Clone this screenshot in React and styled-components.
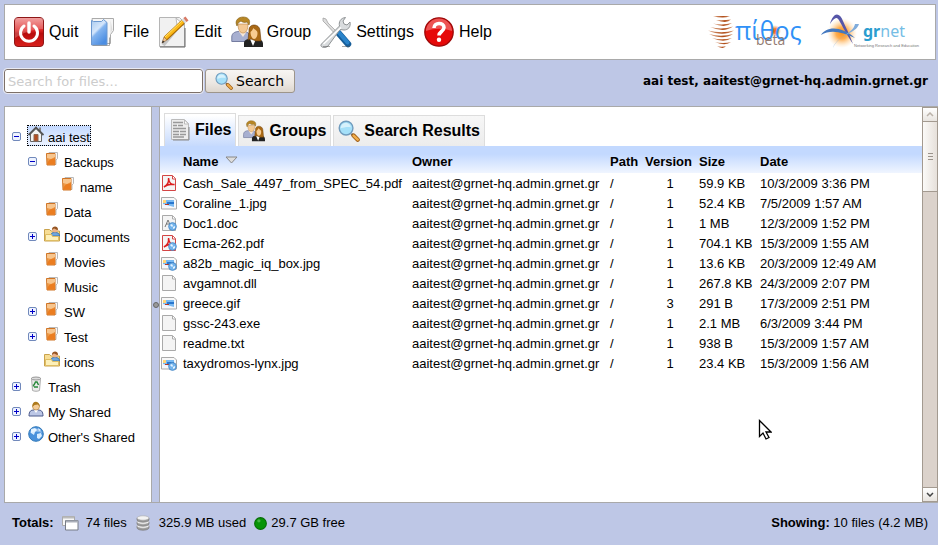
import React from "react";
import styled, { createGlobalStyle, css } from "styled-components";

const GlobalStyle = createGlobalStyle`
  * { box-sizing: border-box; }
  body {
    margin: 0;
    background: #bec7e6;
    color: #000;
    font: 13px/20px "Liberation Sans", Arial, sans-serif;
  }
  button { font: inherit; color: inherit; }
`;

const Page = styled.div`
  display: flex;
  flex-direction: column;
  min-height: 100vh;
`;

const Toolbar = styled.header`
  display: flex;
  align-items: center;
  justify-content: space-between;
  height: 56px;
  margin: 4px 2px 0 4px;
  padding: 0 14px 0 7px;
  background: #fff;
  border: 1px solid #a9a9a9;
`;

const Menu = styled.nav`
  display: flex;
  align-items: center;
  gap: 7px;
`;

const MenuButton = styled.button`
  display: flex;
  align-items: center;
  gap: 4px;
  padding: 0 1px;
  border: 0;
  background: none;
  font-size: 16px;
  line-height: 20px;
  white-space: nowrap;
`;

const Logos = styled.div`
  display: flex;
  align-items: center;
  gap: 16px;
`;

const SearchRow = styled.div`
  display: flex;
  align-items: center;
  justify-content: space-between;
  height: 24px;
  margin: 9px 10px 13px 4px;
`;

const SearchForm = styled.form`
  display: flex;
  gap: 2px;
`;

const SearchInput = styled.input`
  width: 199px;
  height: 24px;
  padding: 0 3px;
  border: 1px solid #7d7068;
  border-radius: 3px;
  outline: 1px solid #e9eaf3;
  background: #fff;
  font: 13px/20px "DejaVu Sans", sans-serif;
  &::placeholder { color: #ccc; opacity: 1; }
`;

const SearchButton = styled.button`
  display: flex;
  align-items: center;
  gap: 3px;
  height: 24px;
  padding: 0 10px 0 9px;
  border: 1px solid #9d958b;
  border-radius: 3px;
  background: linear-gradient(#f7f5f3, #ece7e2 60%, #ddd6ce);
  font: 14px/20px "DejaVu Sans", sans-serif;
`;

const UserName = styled.div`
  font: bold 12px/20px "DejaVu Sans", sans-serif;
`;

const Panels = styled.main`
  display: flex;
  flex: 1;
  margin-left: 4px;
  border-top: 1px solid #a9a9a9;
  border-bottom: 1px solid #a9a9a9;
`;

const Sidebar = styled.aside`
  flex: none;
  width: 148px;
  padding: 16px 0 0 7px;
  background: #fff;
  border: solid #a9a9a9;
  border-width: 0 1px;
`;

const Splitter = styled.div`
  display: flex;
  align-items: center;
  justify-content: center;
  flex: none;
  width: 7px;
`;

const SplitterDot = styled.span`
  flex: none;
  width: 6px;
  height: 6px;
  border: 1px solid #666;
  border-radius: 50%;
  background: #999;
`;

const Content = styled.section`
  flex: 1;
  min-width: 0;
  padding-top: 6px;
  background: #fff;
  border-left: 1px solid #a9a9a9;
`;

const Tree = styled.ul`
  margin: 0;
  padding: 0;
  list-style: none;
`;

const TreeRow = styled.li`
  display: flex;
  align-items: center;
  gap: 6px;
  height: 25px;
  padding-left: ${(p) => p.$depth * 16}px;
`;

const Toggle = styled.button`
  display: block;
  flex: none;
  width: 9px;
  height: 9px;
  margin-top: 1px;
  padding: 0;
  border: 0;
  background: none;
  svg { display: block; }
`;

const ToggleSpace = styled.span`
  flex: none;
  width: 9px;
`;

const TreeItem = styled.button`
  display: flex;
  align-items: center;
  gap: 4px;
  height: 21px;
  padding: 0;
  border: 1px solid transparent;
  background: none;
  white-space: nowrap;
  svg { margin-bottom: 3px; }
  span { margin-top: 4px; }
  ${(p) => p.$selected && css`
    border: 1px dotted #000;
    background: linear-gradient(#c3d9ff, #eaf1ff);
  `}
`;

const Tabs = styled.div`
  display: flex;
  align-items: flex-end;
  gap: 2px;
  height: 33px;
  padding-left: 4px;
`;

const Tab = styled.button`
  display: flex;
  align-items: center;
  gap: 4px;
  height: ${(p) => (p.$active ? 33 : 31)}px;
  padding: 0 4px;
  border: solid #ddd;
  border-width: 1px 1px 0;
  background: ${(p) => (p.$active ? "linear-gradient(#fff 5%, #c6dafd)" : "linear-gradient(#f7f7f7, #ececec)")};
  font-size: 16px;
  font-weight: bold;
  line-height: 20px;
  white-space: nowrap;
`;

const FileTable = styled.table`
  width: 100%;
  table-layout: fixed;
  border-collapse: collapse;
  thead { background: linear-gradient(#c3d9ff 30%, #f0f5ff); }
  col.icon { width: 23px; }
  col.name { width: 229px; }
  col.owner { width: 198px; }
  col.path { width: 35px; }
  col.version { width: 54px; }
  col.size { width: 61px; }
`;

const Th = styled.th`
  height: 27px;
  padding: 5px 0 0;
  text-align: left;
  vertical-align: middle;
  white-space: nowrap;
  svg { margin: 0 0 5px 3px; vertical-align: middle; }
`;

const Td = styled.td`
  height: 20px;
  padding: ${(p) => (p.$icon ? "0 0 0 1px" : "2px 0 0")};
  padding-right: ${(p) => (p.$center ? "4px" : "0")};
  line-height: 18px;
  text-align: ${(p) => (p.$center ? "center" : "left")};
  white-space: nowrap;
  svg { display: block; }
`;

const Scrollbar = styled.div`
  display: flex;
  flex-direction: column;
  flex: none;
  width: 16px;
  background: #dbd2cb;
  border: solid #a39a90;
  border-width: 0 1px;
`;

const ScrollButton = styled.button`
  display: grid;
  place-items: center;
  height: 15px;
  padding: 0;
  border: solid #a39a90;
  border-width: 1px 0;
  background: linear-gradient(#fff, #e8e4df);
`;

const ScrollThumb = styled.div`
  display: grid;
  place-items: center;
  height: 70px;
  border-bottom: 1px solid #a39a90;
  background: linear-gradient(90deg, #fbfaf8, #e6e0da);
`;

const ScrollTrack = styled.div`
  flex: 1;
`;

const Footer = styled.footer`
  display: flex;
  align-items: center;
  justify-content: space-between;
  height: 42px;
  padding: 0 10px 2px 12px;
`;

const Totals = styled.div`
  display: flex;
  align-items: center;
  gap: 8px;
`;

const Total = styled.span`
  display: flex;
  align-items: center;
  gap: ${(p) => p.$gap}px;
`;

const Pointer = styled.svg`
  position: absolute;
  left: 758px;
  top: 419px;
  pointer-events: none;
`;

function QuitIcon() {
  return (
    <svg width="32" height="32" viewBox="0 0 32 32" aria-hidden="true">
      <defs><linearGradient id="quit" x2="0" y2="1"><stop stopColor="#e88" /><stop offset=".45" stopColor="#d22" /><stop offset=".55" stopColor="#b80d0d" /><stop offset="1" stopColor="#d8201c" /></linearGradient></defs>
      <rect x="1.5" y="1.5" width="29" height="29" rx="3.5" fill="url(#quit)" stroke="#8d1717" />
      <path d="M2 2h28v11C20 13 9 17 2 22z" fill="#fff" opacity=".22" />
      <path d="M11 10a8.5 8.5 0 1 0 10 0" fill="none" stroke="#fff" strokeWidth="3" strokeLinecap="round" />
      <path d="M16 7v9" stroke="#fff" strokeWidth="3.4" strokeLinecap="round" />
    </svg>
  );
}

function FileIcon() {
  return (
    <svg width="32" height="32" viewBox="0 0 32 32" aria-hidden="true">
      <defs><linearGradient id="fold" x2=".6" y2="1"><stop stopColor="#a7c9ee" /><stop offset=".45" stopColor="#d5e6fb" /><stop offset=".55" stopColor="#83b4ef" /><stop offset="1" stopColor="#4b8de2" /></linearGradient></defs>
      <path d="M5 2.500h21.500v12l-3 4v9H8z" fill="#f6f6f6" stroke="#aaa" />
      <path d="M23.500 4l2 10-2 3z" fill="#ddd" />
      <path d="M4.500 4.500l2 1h8l2-2 3.500 3v22.500H4.500z" fill="url(#fold)" stroke="#6c98d0" />
      <path d="M5.500 29.500h17v-8" fill="none" stroke="#777" opacity=".6" />
    </svg>
  );
}

function EditIcon() {
  return (
    <svg width="32" height="32" viewBox="0 0 32 32" aria-hidden="true">
      <path d="M1.500 1.500h20l5 5v24h-25z" fill="#f1f1f1" stroke="#b5b5b5" />
      <path d="M2 31h25M27 12v19" stroke="#666" />
      <path d="M18 2l1 7h7z" fill="#fff" stroke="#bbb" />
      <path d="M5 29l20-24" stroke="#000" opacity=".18" strokeWidth="4" />
      <path d="M4 27l2-6 3 3z" fill="#edc18b" stroke="#8a6038" strokeWidth=".6" />
      <path d="M7.500 22.500L25 6" stroke="#a86800" strokeWidth="5" />
      <path d="M7.500 22L25 5.500" stroke="#fbb818" strokeWidth="3.400" />
      <path d="M7 21L24.500 4.500" stroke="#ffe16c" />
      <path d="M25.500 5.500l2.500-2.500" stroke="#ddd" strokeWidth="5" />
      <path d="M27 4l2-1.500" stroke="#d87965" strokeWidth="5" />
      <path d="M4 27l.800-2.500L6.500 26z" fill="#222" />
    </svg>
  );
}

function PeopleIcon({ size = 32 }) {
  return (
    <svg width={size} height={size} viewBox="0 0 32 32" aria-hidden="true">
      <path d="M.800 25.500V21c0-3.500 2.500-5 6-5.500h7c4 .500 5 3 5 10z" fill="#a7afd0" stroke="#747ca0" />
      <path d="M7.500 15l4.500 6 4-6z" fill="#f7e8d8" />
      <path d="M7 8c0 6 2 9 5 9s5-3 5-9z" fill="#f4c994" stroke="#b88143" strokeWidth=".6" />
      <path d="M6 10C3 4 8 1 12 1c5 0 8 3 6 8l-2-3c-3 1-5 0-6-1L7 7z" fill="#b78625" stroke="#805a11" strokeWidth=".6" />
      <path d="M13 31v-4c0-3 3-4 5-4h8c4 0 6 2 6 5v3z" fill="#222" />
      <path d="M19 23l3 7 3-7z" fill="#fff" />
      <path d="M18 15c-1-8 11-8 11 0l1 10h-5l-5-2-3 1z" fill="#a96915" stroke="#6a3d0a" strokeWidth=".6" />
      <path d="M19.500 16c1-1 2-2 3-4 1 2 4 2 4 5 0 4-2 6-3.500 6s-3.500-3-3.500-7z" fill="#f8cc91" />
    </svg>
  );
}

function SettingsIcon() {
  return (
    <svg width="32" height="32" viewBox="0 0 32 32" aria-hidden="true">
      <path d="M3 2l3 1 2 4 10 10-2 2L6 8 3 5z" fill="#ddd" stroke="#999" strokeWidth=".7" />
      <path d="M18.500 17l9.500 11" stroke="#175e99" strokeWidth="6.500" strokeLinecap="round" />
      <path d="M18.500 16l9 10.500" stroke="#2a83ca" strokeWidth="4" strokeLinecap="round" />
      <path d="M1.500 28l18-18c-1-4 1-8 6-8.500L23 5l1 3 3 1 3-3c1 5-2 8-6 8l-4-.500L8 30c-3 3-9 1-6.500-2z" fill="#d9dcde" stroke="#909496" />
      <path d="M3.500 28L21 11.500" stroke="#fff" strokeWidth="1.500" />
      <path d="M3 30.500h7M22 30.500h8" stroke="#555" opacity=".5" />
    </svg>
  );
}

function HelpIcon() {
  return (
    <svg width="32" height="32" viewBox="0 0 32 32" aria-hidden="true">
      <circle cx="16" cy="16" r="14.200" fill="#e60909" stroke="#9c0909" strokeWidth="1.300" />
      <path d="M3 15a13 12.500 0 0 1 26 0c-9-3-17-3-26 0z" fill="#fff" opacity=".3" />
      <path d="M11 12c0-6 10-6 10-.500 0 4-5 4-5 8" fill="none" stroke="#fff" strokeWidth="3.600" />
      <circle cx="16" cy="23.800" r="2.200" fill="#fff" />
    </svg>
  );
}

function MagnifierIcon({ size }) {
  return (
    <svg width={size} height={size} viewBox="0 0 24 24" aria-hidden="true">
      <path d="M14.500 15l2 2" stroke="#777" strokeWidth="2.500" />
      <path d="M17 17l4.500 4.500" stroke="#9c5a12" strokeWidth="4.600" strokeLinecap="round" />
      <path d="M17 17l4.500 4.500" stroke="#f1ae4c" strokeWidth="2.800" strokeLinecap="round" />
      <circle cx="8.800" cy="8.800" r="7.500" fill="#a5e0f9" stroke="#709bbd" strokeWidth="1.500" />
      <path d="M3 9c0-8 11-7 11-1-4-1-7 0-11 1z" fill="#fff" opacity=".55" />
    </svg>
  );
}

function PithosLogo() {
  return (
    <svg width="95" height="40" viewBox="0 0 95 40" role="img" aria-label="πίθος beta">
      <defs>
        <linearGradient id="clay"><stop stopColor="#dba483" /><stop offset=".6" stopColor="#b04d18" /><stop offset="1" stopColor="#cf8d67" /></linearGradient>
        <radialGradient id="sun"><stop stopColor="#ef5a10" /><stop offset=".4" stopColor="#f28038" /><stop offset="1" stopColor="#f8ad72" stopOpacity="0" /></radialGradient>
      </defs>
      <g fill="url(#clay)">
        <path d="M6 4h17q-7 3-17 0z" />
        <path d="M9 8q8 .500 15-.500-4 4.500-15 .500z" />
        <path d="M6 11.500q10 2 19-.500-7 5.500-19 .500z" />
        <path d="M3 15q12 3 23-.500-9 6.500-23 .500z" />
        <path d="M1 18.500q14 3.500 26 0-11 6.500-26 0z" />
        <path d="M2 22q12 3.500 24 0-10 6.500-24 0z" />
        <path d="M5 26q10 2.500 20 0-8 5.500-20 0z" />
        <path d="M8 30q8 2 16 0-6 4.500-16 0z" />
        <path d="M10 34q5 1.500 9 0-3 4-9 0z" />
      </g>
      <circle cx="68" cy="19" r="6" fill="url(#sun)" />
      <text x="28" y="28" fontFamily="Open Sans, sans-serif" fontSize="25" fill="#2f91f7">πίθος</text>
      <text x="49" y="33" fontFamily="Open Sans, sans-serif" fontSize="14" fill="#927b72">beta</text>
    </svg>
  );
}

function GrnetLogo() {
  return (
    <svg width="103" height="40" viewBox="-3 0 103 40" role="img" aria-label="grnet – Networking Research and Education">
      <defs><radialGradient id="glow"><stop stopColor="#ff9015" /><stop offset=".4" stopColor="#ffad4f" /><stop offset="1" stopColor="#ffe0b5" stopOpacity="0" /></radialGradient></defs>
      <circle cx="21" cy="21" r="15" fill="url(#glow)" />
      <path d="M9 12c3-11 9-13 13-3 3 7 6 12 10 23-6-9-9-15-13-22-3-6-5-5-10 2z" fill="#5656a8" />
      <path d="M0 23c5-8 19-10 34 3-13-6-24-9-34-3z" fill="#4478bf" />
      <path d="M38 12C35 22 19 21 12 36c4-12 20-14 22-24z" fill="#80acdb" />
      <text x="42" y="25" fontFamily="Noto Sans, sans-serif" fontSize="16" fill="#75bde5"><tspan fontWeight="bold" fill="#2b9dcf">gr</tspan>net</text>
      <text x="33" y="35" fontFamily="Liberation Sans, sans-serif" fontSize="4" fill="#777">Networking Research and Education</text>
    </svg>
  );
}

function ToggleGlyph({ open }) {
  return (
    <svg width="9" height="9" viewBox="0 0 9 9" aria-hidden="true">
      <rect x=".5" y=".5" width="8" height="8" rx="1.500" fill="#eef3ff" stroke="#7189bb" />
      <path d={open ? "M2 4.500h5" : "M2 4.500h5M4.500 2v5"} stroke="#0000c8" />
    </svg>
  );
}

function TreeIcon({ kind }) {
  const art = {
    home: (
      <>
        <path d="M2.500 8v7.500h11V8L8 2.500z" fill="#f2f2f2" stroke="#666" />
        <path d="M11 1.500h2V6h-2z" fill="#888" />
        <path d="M.500 9L8 1.500 15.500 9" fill="none" stroke="#555" strokeWidth="1.800" />
        <path d="M6 15V8.500h4V15z" fill="#b44d20" stroke="#8e6850" />
      </>
    ),
    folder: (
      <>
        <path d="M5 1.500h8.500v6L12 9v4.500H5z" fill="#f7f7f7" stroke="#b9b9b9" />
        <path d="M2.500 2.500h8.500v11.500H3z" fill="#ee9b48" stroke="#cf7425" />
        <path d="M3 3h8v3l-4 2-4-1z" fill="#f7c58d" />
        <path d="M3 13.500c1-4 3-6 8-6v6z" fill="#eb7d20" />
      </>
    ),
    shared: (
      <>
        <path d="M.500 5V3.500h5L7 5h8.500v10H.500z" fill="#f7dd94" stroke="#c9a24c" />
        <path d="M7 10c0-3 1-3.500 4-3.500s4.500 1 4.500 3.500z" fill="#6fa7de" stroke="#3d76b4" />
        <circle cx="11" cy="3.800" r="2.700" fill="#edb389" />
        <path d="M8 4c-.500-4 6-5 6 0-2 0-3-1.500-4-1.500z" fill="#955523" />
        <path d="M1.500 8.500h6l1 2h6v4h-13z" fill="#fdf0b9" stroke="#dfbd62" />
      </>
    ),
    trash: (
      <>
        <path d="M3.500 2h9l-1 12.500c-2 1-5 1-7 0z" fill="#ececec" stroke="#aaa" />
        <ellipse cx="8" cy="2.500" rx="4.500" ry="1.500" fill="#ddd" stroke="#999" />
        <path d="M6 9l1.500-3H9l1.500 3M10 11H6M5.500 10.500v-2" fill="none" stroke="#29883b" strokeWidth="1.500" />
      </>
    ),
    user: (
      <>
        <path d="M1 15c0-5 2-6 5-6h4c3 0 5 1 5 6z" fill="#bcc7e6" stroke="#4d5b8c" />
        <path d="M6 9l2 3 2-3z" fill="#fff" />
        <circle cx="8" cy="5.500" r="3.500" fill="#f5cc96" stroke="#a67b38" strokeWidth=".6" />
        <path d="M4.500 6c-1-7 7-7 7.500 0L10 3.500 6.500 4z" fill="#ad7a1d" />
      </>
    ),
    globe: (
      <>
        <circle cx="8" cy="8" r="7.300" fill="#4991dc" stroke="#337ab8" />
        <path d="M3 3l4-1 2 2-2 2-1 3-3-2zM9 8l4-1 1 3-3 3-2-1zM10 2l3 2-2 1z" fill="#d9edff" />
        <path d="M2 7c1-6 11-6 12 0-4-2-8-2-12 0z" fill="#fff" opacity=".4" />
      </>
    ),
  };
  return <svg width="16" height="16" viewBox="0 0 16 16" aria-hidden="true">{art[kind]}</svg>;
}

function NewsIcon() {
  return (
    <svg width="22" height="24" viewBox="0 0 22 24" aria-hidden="true">
      <path d="M2.500 1.500h13l4 4v16h-17z" fill="#ededed" stroke="#bbb" />
      <path d="M4 22h16V9" fill="none" stroke="#888" />
      <path d="M15.500 2v4h4z" fill="#fff" stroke="#bbb" />
      <path d="M4 4.500h10M4 7.500h4M9 7.500h5M4 10.500h13M4 13.500h6M11 13.500h6M4 16.500h6M11 16.500h6M4 19h11" stroke="#999" strokeWidth="1.400" />
    </svg>
  );
}

function DocIcon({ kind, shared }) {
  return (
    <svg width="16" height="16" viewBox="0 0 16 16" aria-hidden="true">
      {kind === "image" ? (
        <>
          <path d="M.500 2.500h12.500l2.500 2.500v9H.500z" fill="#f8f8f8" stroke="#aaa" />
          <path d="M2 5h11v7H2z" fill="#79b9f1" />
          <path d="M6 7h7v2H6z" fill="#2676ce" />
          <path d="M2 5h3v3H2z" fill="#ffd477" />
          <path d="M2 9l4 1 7 2H2z" fill="#f1f6ff" />
          <path d="M4 9.500h4" stroke="#b33b28" />
        </>
      ) : (
        <>
          <path d="M1.500.500h10l3 3v12h-13z" fill="#f4f4f4" stroke={kind === "pdf" ? "#d34545" : "#a9a9a9"} />
          <path d="M11.500 1v3h3" fill="#fff" stroke={kind === "pdf" ? "#d34545" : "#aaa"} />
        </>
      )}
      {kind === "pdf" && <path d="M3 12c4-2 5-5 4.500-9C8 8 10 10 13.500 9.500 10 9 6 9.500 3 12z" fill="none" stroke="#dc1d1d" strokeWidth="1.500" />}
      {kind === "doc" && <path d="M4 12l3-7 3 7M5 9h4" fill="none" stroke="#777" />}
      {shared && (
        <>
          <circle cx="11.500" cy="11.500" r="3.900" fill="#73b4ec" stroke="#4380bb" strokeWidth=".7" />
          <path d="M9 10l2-1 1 2-1 1zM12 12l2-1v2l-2 1z" fill="#e5f3ff" />
        </>
      )}
    </svg>
  );
}

function WindowsIcon() {
  return (
    <svg width="17" height="16" viewBox="0 0 17 16" aria-hidden="true">
      <path d="M.500 1.500h12v9h-12z" fill="#f7f7f7" stroke="#aaa" />
      <path d="M1 2.500h11" stroke="#bbb" strokeWidth="2" />
      <path d="M3.500 5.500h12.500v9.500H3.500z" fill="#fff" stroke="#777c86" />
      <path d="M4 6.500h12" stroke="#aaaeb8" strokeWidth="2" />
    </svg>
  );
}

function DiskIcon() {
  return (
    <svg width="16" height="16" viewBox="-1 0 16 16" aria-hidden="true">
      {[11, 7, 3].map((y) => (
        <g key={y}>
          <path d={`M1 ${y}v2c1 3 11 3 12 0v-2z`} fill="#999" stroke="#777" strokeWidth=".6" />
          <ellipse cx="7" cy={y} rx="6" ry="2.200" fill="#f3f3f3" stroke="#aaa" strokeWidth=".6" />
        </g>
      ))}
    </svg>
  );
}

function FreeIcon() {
  return (
    <svg width="13" height="13" viewBox="0 0 12 12" aria-hidden="true">
      <circle cx="6" cy="6" r="5.400" fill="#079407" stroke="#056d05" />
      <circle cx="4.500" cy="3.500" r="1.500" fill="#45b545" />
    </svg>
  );
}

const menu = [
  ["Quit", QuitIcon],
  ["File", FileIcon],
  ["Edit", EditIcon],
  ["Group", PeopleIcon],
  ["Settings", SettingsIcon],
  ["Help", HelpIcon],
];

const tree = [
  ["aai test", 0, "home", "open"],
  ["Backups", 1, "folder", "open"],
  ["name", 2, "folder"],
  ["Data", 1, "folder"],
  ["Documents", 1, "shared", "closed"],
  ["Movies", 1, "folder"],
  ["Music", 1, "folder"],
  ["SW", 1, "folder", "closed"],
  ["Test", 1, "folder", "closed"],
  ["icons", 1, "shared"],
  ["Trash", 0, "trash", "closed"],
  ["My Shared", 0, "user", "closed"],
  ["Other's Shared", 0, "globe", "closed"],
];

const owner = "aaitest@grnet-hq.admin.grnet.gr";
const files = [
  ["Cash_Sale_4497_from_SPEC_54.pdf", 1, "59.9 KB", "10/3/2009 3:36 PM", "pdf"],
  ["Coraline_1.jpg", 1, "52.4 KB", "7/5/2009 1:57 AM", "image"],
  ["Doc1.doc", 1, "1 MB", "12/3/2009 1:52 PM", "doc", true],
  ["Ecma-262.pdf", 1, "704.1 KB", "15/3/2009 1:55 AM", "pdf", true],
  ["a82b_magic_iq_box.jpg", 1, "13.6 KB", "20/3/2009 12:49 AM", "image", true],
  ["avgamnot.dll", 1, "267.8 KB", "24/3/2009 2:07 PM", "blank"],
  ["greece.gif", 3, "291 B", "17/3/2009 2:51 PM", "image"],
  ["gssc-243.exe", 1, "2.1 MB", "6/3/2009 3:44 PM", "blank"],
  ["readme.txt", 1, "938 B", "15/3/2009 1:57 AM", "blank"],
  ["taxydromos-lynx.jpg", 1, "23.4 KB", "15/3/2009 1:56 AM", "image", true],
];

export default function App() {
  return (
    <Page>
      <GlobalStyle />
      <Toolbar>
        <Menu aria-label="Main menu">
          {menu.map(([label, Icon]) => (
            <MenuButton key={label} type="button"><Icon />{label}</MenuButton>
          ))}
        </Menu>
        <Logos><PithosLogo /><GrnetLogo /></Logos>
      </Toolbar>

      <SearchRow>
        <SearchForm role="search" onSubmit={(e) => e.preventDefault()}>
          <SearchInput type="text" aria-label="Search for files" placeholder="Search for files..." />
          <SearchButton type="submit"><MagnifierIcon size={18} />Search</SearchButton>
        </SearchForm>
        <UserName>aai test, {owner}</UserName>
      </SearchRow>

      <Panels>
        <Sidebar>
          <Tree>
            {tree.map(([label, depth, icon, state]) => (
              <TreeRow key={label} $depth={depth}>
                {state ? (
                  <Toggle type="button" aria-label={`Toggle ${label}`} aria-expanded={state === "open"}>
                    <ToggleGlyph open={state === "open"} />
                  </Toggle>
                ) : <ToggleSpace />}
                <TreeItem type="button" $selected={label === "aai test"}>
                  <TreeIcon kind={icon} /><span>{label}</span>
                </TreeItem>
              </TreeRow>
            ))}
          </Tree>
        </Sidebar>
        <Splitter><SplitterDot /></Splitter>
        <Content>
          <Tabs role="tablist">
            <Tab type="button" role="tab" aria-selected="true" $active><NewsIcon />Files</Tab>
            <Tab type="button" role="tab" aria-selected="false"><PeopleIcon size={22} />Groups</Tab>
            <Tab type="button" role="tab" aria-selected="false"><MagnifierIcon size={22} />Search Results</Tab>
          </Tabs>
          <FileTable>
            <colgroup>
              <col className="icon" /><col className="name" /><col className="owner" /><col className="path" />
              <col className="version" /><col className="size" /><col />
            </colgroup>
            <thead>
              <tr>
                <Th aria-label="Type" />
                <Th aria-sort="descending">
                  Name{" "}
                  <svg width="13" height="8" viewBox="0 0 13 8" aria-hidden="true"><path d="M1 1h11L6.500 7z" fill="#ddd" stroke="#888" /></svg>
                </Th>
                <Th>Owner</Th><Th>Path</Th><Th>Version</Th><Th>Size</Th><Th>Date</Th>
              </tr>
            </thead>
            <tbody>
              {files.map(([name, version, size, date, kind, shared]) => (
                <tr key={name}>
                  <Td $icon><DocIcon kind={kind} shared={shared} /></Td>
                  <Td>{name}</Td><Td>{owner}</Td><Td>/</Td><Td $center>{version}</Td><Td>{size}</Td><Td>{date}</Td>
                </tr>
              ))}
            </tbody>
          </FileTable>
        </Content>
        <Scrollbar>
          <ScrollButton type="button" aria-label="Scroll up">
            <svg width="8" height="5" viewBox="0 0 8 5"><path d="M1 4l3-3 3 3" fill="none" stroke="#bbb2a9" strokeWidth="1.500" /></svg>
          </ScrollButton>
          <ScrollThumb>
            <svg width="5" height="7" viewBox="0 0 5 7"><path d="M0 .500h5M0 3.500h5M0 6.500h5" stroke="#9b938b" /></svg>
          </ScrollThumb>
          <ScrollTrack />
          <ScrollButton type="button" aria-label="Scroll down">
            <svg width="8" height="5" viewBox="0 0 8 5"><path d="M1 1l3 3 3-3" fill="none" stroke="#444" strokeWidth="1.500" /></svg>
          </ScrollButton>
        </Scrollbar>
      </Panels>

      <Footer>
        <Totals>
          <b>Totals:</b>
          <Total $gap={7}><WindowsIcon />74 files</Total>
          <Total $gap={8}><DiskIcon />325.9 MB used</Total>
          <Total $gap={4}><FreeIcon />29.7 GB free</Total>
        </Totals>
        <span><b>Showing:</b> 10 files (4.2 MB)</span>
      </Footer>
      <Pointer width="14" height="22" viewBox="0 0 14 22" aria-hidden="true">
        <path d="M1.500 1.500v16l3.500-3.500 3 6 3-1.500-3-5.500h5z" fill="#fff" stroke="#000" strokeWidth="1.300" />
      </Pointer>
    </Page>
  );
}
